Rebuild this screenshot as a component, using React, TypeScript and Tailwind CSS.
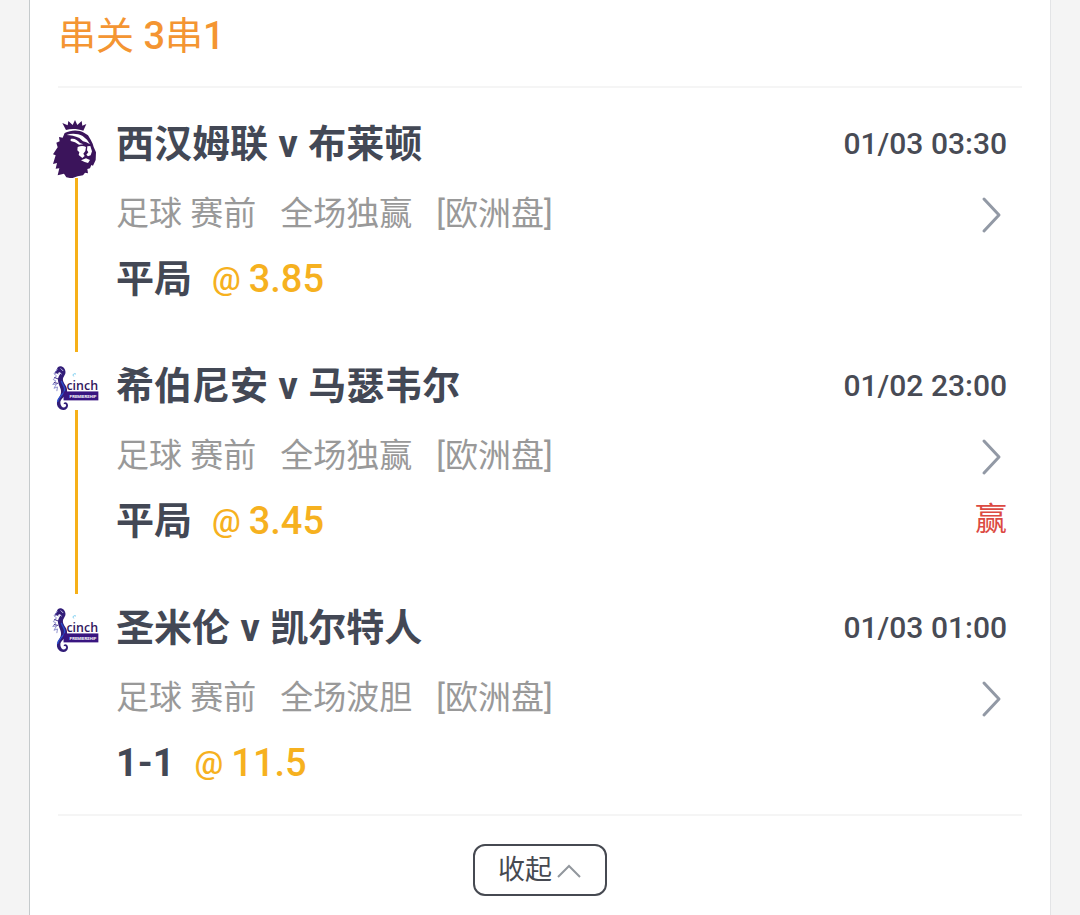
type Bet = {
  id: string;
  league: 'premier' | 'cinch';
  home: string;
  away: string;
  time: string;
  market: string;
  pick: string;
  odds: string;
  result?: string;
};

const bets: Bet[] = [
  { id: 'a', league: 'premier', home: '西汉姆联', away: '布莱顿', time: '01/03 03:30', market: '全场独赢', pick: '平局', odds: '3.85' },
  { id: 'b', league: 'cinch', home: '希伯尼安', away: '马瑟韦尔', time: '01/02 23:00', market: '全场独赢', pick: '平局', odds: '3.45', result: '赢' },
  { id: 'c', league: 'cinch', home: '圣米伦', away: '凯尔特人', time: '01/03 01:00', market: '全场波胆', pick: '1-1', odds: '11.5' },
];

function PremierLogo() {
  return (
    <svg viewBox="38 28 138 174" className="h-[58px] w-[46px] shrink-0" aria-hidden="true">
      <g fill="#3b145b">
        <path d="M77 58 L66 37 L82 44 L84 31 L97 43 L104 28 L111 43 L124 31 L126 45 L138 40 L129 60 C112 54 92 53 77 58Z" />
        <path d="M73 67 C92 57 116 57 131 66 L143 74 L151 87 L157 99 L160 109 L167 125 L166 148 L158 165 L153 163 L149 173 L141 175 L143 188 L134 186 L128 194 L112 197 L94 203 L78 200 L71 189 L52 194 L57 173 L46 174 L50 157 L38 160 L46 134 L38 131 L52 110 L48 96 L58 92 L56 79 L67 81Z" />
      </g>
      <g fill="#fff">
        <path d="M79 73 C94 67 113 69 127 76 L140 87 L149 101 L138 95 L128 92 L117 82 C104 76 91 74 79 73Z" />
        <path d="M91 85 C102 82 110 87 119 97 L129 101 L116 102 L104 95 L91 91Z" />
        <path d="M112 109 C121 105 130 105 137 109 L135 121 L129 129 L133 136 L126 142 L115 133 L117 125 L111 119Z" />
        <path d="M141 107 L150 106 L155 122 L151 134 L143 137 L138 132 L144 125 L140 119Z" />
        <path d="M122 149 L137 143 L149 148 L143 157 L133 154Z" />
      </g>
    </svg>
  );
}

function CinchLogo() {
  return (
    <svg viewBox="38 21 144 150" className="h-12 w-[46px] shrink-0 overflow-visible" aria-hidden="true">
      <path d="M53 37 C62 30 76 37 77 51 C78 61 69 66 69 76 C69 89 84 96 82 113 C79 130 60 134 61 149 C62 160 70 167 77 161 C82 156 78 150 72 153 C69 145 84 143 85 156 C85 171 67 176 57 166 C42 150 56 136 62 122 C67 106 56 97 54 81 C51 68 62 61 61 53 L43 58Z" fill="#321d78" />
      <path d="M52 43 L41 58 L49 64 L39 76 L47 80 L37 91 L49 90 L41 103 L52 99 L50 112" fill="none" stroke="#8b8dcd" strokeWidth="3" />
      <path d="M45 52 L55 58 M42 69 L54 74 M41 85 L54 88" stroke="#3a2684" strokeWidth="3" />
      <path d="M64 80 C66 91 78 98 74 111 C70 124 54 130 52 146" fill="none" stroke="#2b4fd0" strokeWidth="4" />
      <path d="M62 41 L70 49 M57 54 L65 59" stroke="#c9caea" strokeWidth="3" />
      <path d="M103 66 C98 60 104 55 110 59" fill="none" stroke="#67c7ed" strokeWidth="3" />
      <text x="80" y="107" fontSize="43" fontWeight="600" fontFamily="'Open Sans', sans-serif" fill="#30165d" className="[font-size:39px]">cinch</text>
      <rect x="71" y="113" width="109" height="28" fill="#391580" />
      <text x="90" y="133" fontWeight="700" fontFamily="'Liberation Sans Narrow', Roboto, sans-serif" fill="#fff" className="[font-size:13px]">PREMIERSHIP</text>
    </svg>
  );
}

function BetItem({ bet, last }: { bet: Bet; last: boolean }) {
  return (
    <li className="flex gap-[17px]">
      <div className="flex w-[46px] shrink-0 flex-col items-center">
        {bet.league === 'premier' ? <PremierLogo /> : <CinchLogo />}
        {!last && <span className="mb-[10px] w-[3px] flex-1 bg-[#f6b018]" />}
      </div>
      <div className={last ? 'min-w-0 flex-1 pb-[26px]' : 'min-w-0 flex-1 pb-[58px]'}>
        <div className="flex h-12 items-center justify-between">
          <h2 className="text-[38px] leading-[48px] font-bold text-[#434855]">
            {bet.home} <span className="mx-px">v</span> {bet.away}
          </h2>
          <time className="text-[30px] leading-[48px] font-medium text-[#484b55]">{bet.time}</time>
        </div>
        <div className="mt-[22px] flex h-12 items-center justify-between text-[#999]">
          <p className="flex gap-6 text-[33px] leading-[48px]">
            <span>足球 赛前</span>
            <span>{bet.market}</span>
            <span>[欧洲盘]</span>
          </p>
          <button type="button" aria-label="查看赛事" className="text-[#9299a5]">
            <svg viewBox="0 0 30 40" className="h-10 w-[30px]" fill="none" stroke="currentColor" strokeWidth="3" strokeLinecap="round" strokeLinejoin="round">
              <path d="M7 5 L22 21 L7 37" />
            </svg>
          </button>
        </div>
        <div className="mt-4 flex h-[50px] items-center justify-between">
          <p className="flex items-center gap-5 leading-[50px]">
            <strong className="text-[38px] font-bold text-[#434855]">{bet.pick}</strong>
            <span className="flex items-center gap-2 font-medium text-[#f6b11f]">
              <span className="text-[32px]">@</span>
              <span className="text-[38px]">{bet.odds}</span>
            </span>
          </p>
          {bet.result && <span className="pb-1 text-[32px] leading-[46px] text-[#dc4a42]">{bet.result}</span>}
        </div>
      </div>
    </li>
  );
}

export default function App() {
  return (
    <div className="min-h-screen bg-[#f4f4f4] px-[29px] font-[Roboto,'Noto_Sans_CJK_SC',sans-serif]">
      <main className="min-h-screen border-r border-l border-r-[#e3e4e6] border-l-[#c5cacc] bg-white px-7 pb-[19px]">
        <h1 className="h-[88px] border-b-2 border-[#f5f5f5] pt-[11px] text-[38px] leading-[50px] font-normal text-[#f49532]">
          串关 <span className="font-medium">3</span>串<span className="font-medium">1</span>
        </h1>
        <ol className="-ml-[5px] pt-8 pr-[15px]">
          {bets.map((bet, i) => (
            <BetItem key={bet.id} bet={bet} last={i === bets.length - 1} />
          ))}
        </ol>
        <div className="flex justify-center border-t-2 border-[#f5f5f5] pt-7">
          <button type="button" className="flex h-[52px] w-[134px] items-center justify-center gap-1 rounded-[12px] border-2 border-[#464951] text-[27px] leading-10 text-[#464951]">
            收起
            <svg viewBox="0 0 26 26" className="h-[26px] w-[26px] text-[#92979d]" fill="none" stroke="currentColor" strokeWidth="2" aria-hidden="true">
              <path d="M2 20 L13 9 L24 20" />
            </svg>
          </button>
        </div>
      </main>
    </div>
  );
}
